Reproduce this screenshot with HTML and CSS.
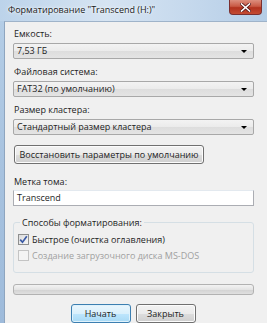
FILE: index.html
```html
<!DOCTYPE html>
<html lang="ru">
<head>
    <meta charset="UTF-8">
    <meta name="viewport" content="width=device-width, initial-scale=1.0">
    <title>Форматирование</title>
    <link rel="stylesheet" href="styles.css">
</head>
<body>
    <div class="window">
        <div class="titlebar">
            <span class="title">Форматирование "Transcend (H:)"</span>
            <span class="close-btn">
                <svg width="11" height="9" viewBox="0 0 11 9">
                    <path d="M1.5 1 L9.5 8 M9.5 1 L1.5 8" stroke="#5a1a1a" stroke-width="3.2" stroke-linecap="square"/>
                    <path d="M1.5 1 L9.5 8 M9.5 1 L1.5 8" stroke="#fff" stroke-width="1.6" stroke-linecap="square"/>
                </svg>
            </span>
        </div>
        <div class="frame">
            <div class="frame-edge"></div>
            <div class="client">
                <div class="field">
                    <div class="field-label">Емкость:</div>
                    <div class="combo"><span>7,53 ГБ</span><span class="arrow"></span></div>
                </div>
                <div class="field">
                    <div class="field-label">Файловая система:</div>
                    <div class="combo"><span>FAT32 (по умолчанию)</span><span class="arrow"></span></div>
                </div>
                <div class="field">
                    <div class="field-label">Размер кластера:</div>
                    <div class="combo"><span>Стандартный размер кластера</span><span class="arrow"></span></div>
                </div>
                <div class="restore-row">
                    <button class="btn restore-btn">Восстановить параметры по умолчанию</button>
                </div>
                <div class="field volume">
                    <div class="field-label">Метка тома:</div>
                    <div class="textbox">Transcend</div>
                </div>
                <fieldset class="group">
                    <legend>Способы форматирования:</legend>
                    <div class="check-row">
                        <span class="checkbox checked">
                            <svg width="9" height="9" viewBox="0 0 9 9">
                                <path d="M1.2 4.6 L3.5 7.2 L7.8 1.2" fill="none" stroke="#3b5aa5" stroke-width="1.7"/>
                            </svg>
                        </span>
                        <span>Быстрое (очистка оглавления)</span>
                    </div>
                    <div class="check-row disabled">
                        <span class="checkbox"></span>
                        <span>Создание загрузочного диска MS-DOS</span>
                    </div>
                </fieldset>
                <div class="progress"></div>
                <div class="actions">
                    <button class="btn default-btn">Начать</button>
                    <button class="btn">Закрыть</button>
                </div>
            </div>
        </div>
    </div>
</body>
</html>
```

FILE: styles.css
```css
body {
    margin: 0;
    font-family: "Open Sans", "Noto Sans", sans-serif;
    font-size: 9px;
    color: #1e1e1e;
    background-color: #f0f0f0;
}
.window {
    width: 267px;
    height: 323px;
    display: flex;
    flex-direction: column;
    overflow: hidden;
}
.titlebar {
    height: 21px;
    flex-shrink: 0;
    display: flex;
    align-items: flex-start;
    background: linear-gradient(to right, #bcd3ea, #d6e4f2 40%, #c3d7ec 75%, #b4cde6);
}
.title {
    padding-left: 8px;
    line-height: 20px;
    color: #1a1a1a;
    text-shadow: 0 0 4px #f4f8fc, 0 0 2px #f4f8fc;
}
.close-btn {
    margin-left: auto;
    margin-right: 5px;
    width: 33px;
    height: 15px;
    display: flex;
    align-items: center;
    justify-content: center;
    border: 1px solid #7a2f2f;
    border-top: none;
    border-radius: 0 0 4px 4px;
    background: linear-gradient(to bottom, #dc8f7e, #c95a45 45%, #b2321e 55%, #c44c33);
    box-sizing: border-box;
}
.frame {
    flex: 1;
    display: flex;
}
.frame-edge {
    width: 4px;
    background: linear-gradient(to bottom, #b4cde6, #a7c2df 50%, #9ebbdb);
}
.client {
    flex: 1;
    border-left: 1px solid #8ea5bf;
    border-top: 1px solid #9fb3c9;
    padding: 5px 13px 0 8px;
    background-color: #f0f0f0;
}
.field {
    margin-bottom: 6px;
}
.field-label {
    line-height: 13px;
    margin-bottom: 3px;
    padding-left: 1px;
}
.combo {
    height: 16px;
    box-sizing: border-box;
    border: 1px solid #a8a8a8;
    border-radius: 2px;
    background: linear-gradient(to bottom, #f3f3f3, #ebebeb 50%, #dddddd 51%, #e4e4e4);
    display: flex;
    align-items: center;
    padding: 0 6px 0 3px;
    line-height: 14px;
}
.arrow {
    margin-left: auto;
    width: 0;
    height: 0;
    border-left: 3px solid transparent;
    border-right: 3px solid transparent;
    border-top: 3px solid #000;
}
.restore-row {
    padding: 4px 0 11px 1px;
}
.btn {
    font-family: inherit;
    font-size: 9px;
    color: #1e1e1e;
    height: 19px;
    padding: 0;
    border: 1px solid #707070;
    border-radius: 3px;
    background: linear-gradient(to bottom, #f2f2f2, #ebebeb 50%, #dddddd 51%, #cfcfcf);
    box-shadow: inset 0 0 0 1px #fcfcfc;
}
.restore-btn {
    width: 190px;
}
.volume .field-label {
    margin-bottom: 2px;
}
.textbox {
    height: 16px;
    box-sizing: border-box;
    border: 1px solid #abadb3;
    border-top-color: #e3e9ef;
    background-color: #fff;
    padding-left: 3px;
    line-height: 14px;
}
.group {
    margin: 10px 0 0;
    padding: 2px 6px 9px 4px;
    border: 1px solid #d5dfe5;
    border-radius: 3px;
}
.group legend {
    padding: 0 2px;
    margin-left: 2px;
    line-height: 13px;
}
.check-row {
    display: flex;
    align-items: center;
    gap: 3px;
    height: 16px;
}
.check-row.disabled {
    color: #a0a0a0;
}
.checkbox {
    width: 11px;
    height: 11px;
    box-sizing: border-box;
    border: 1px solid #8e8f8f;
    background: linear-gradient(135deg, #dcdcdc, #f6f6f6);
    display: flex;
    align-items: center;
    justify-content: center;
}
.disabled .checkbox {
    border-color: #c4c4c4;
    background: #f4f4f4;
}
.progress {
    margin-top: 11px;
    height: 11px;
    box-sizing: border-box;
    border: 1px solid #b2b2b2;
    border-radius: 3px;
    background: linear-gradient(to bottom, #f3f3f3, #e4e4e4 50%, #d4d4d4 60%, #e0e0e0);
}
.actions {
    display: flex;
    justify-content: center;
    gap: 5px;
    margin-top: 9px;
    padding-right: 1px;
}
.actions .btn {
    width: 60px;
}
.default-btn {
    border-color: #3c7fb1;
    background: linear-gradient(to bottom, #eaf6fd, #d9f0fc 50%, #bee6fd 51%, #a7d9f5);
    box-shadow: inset 0 0 0 1px #dff2fc;
}
```
